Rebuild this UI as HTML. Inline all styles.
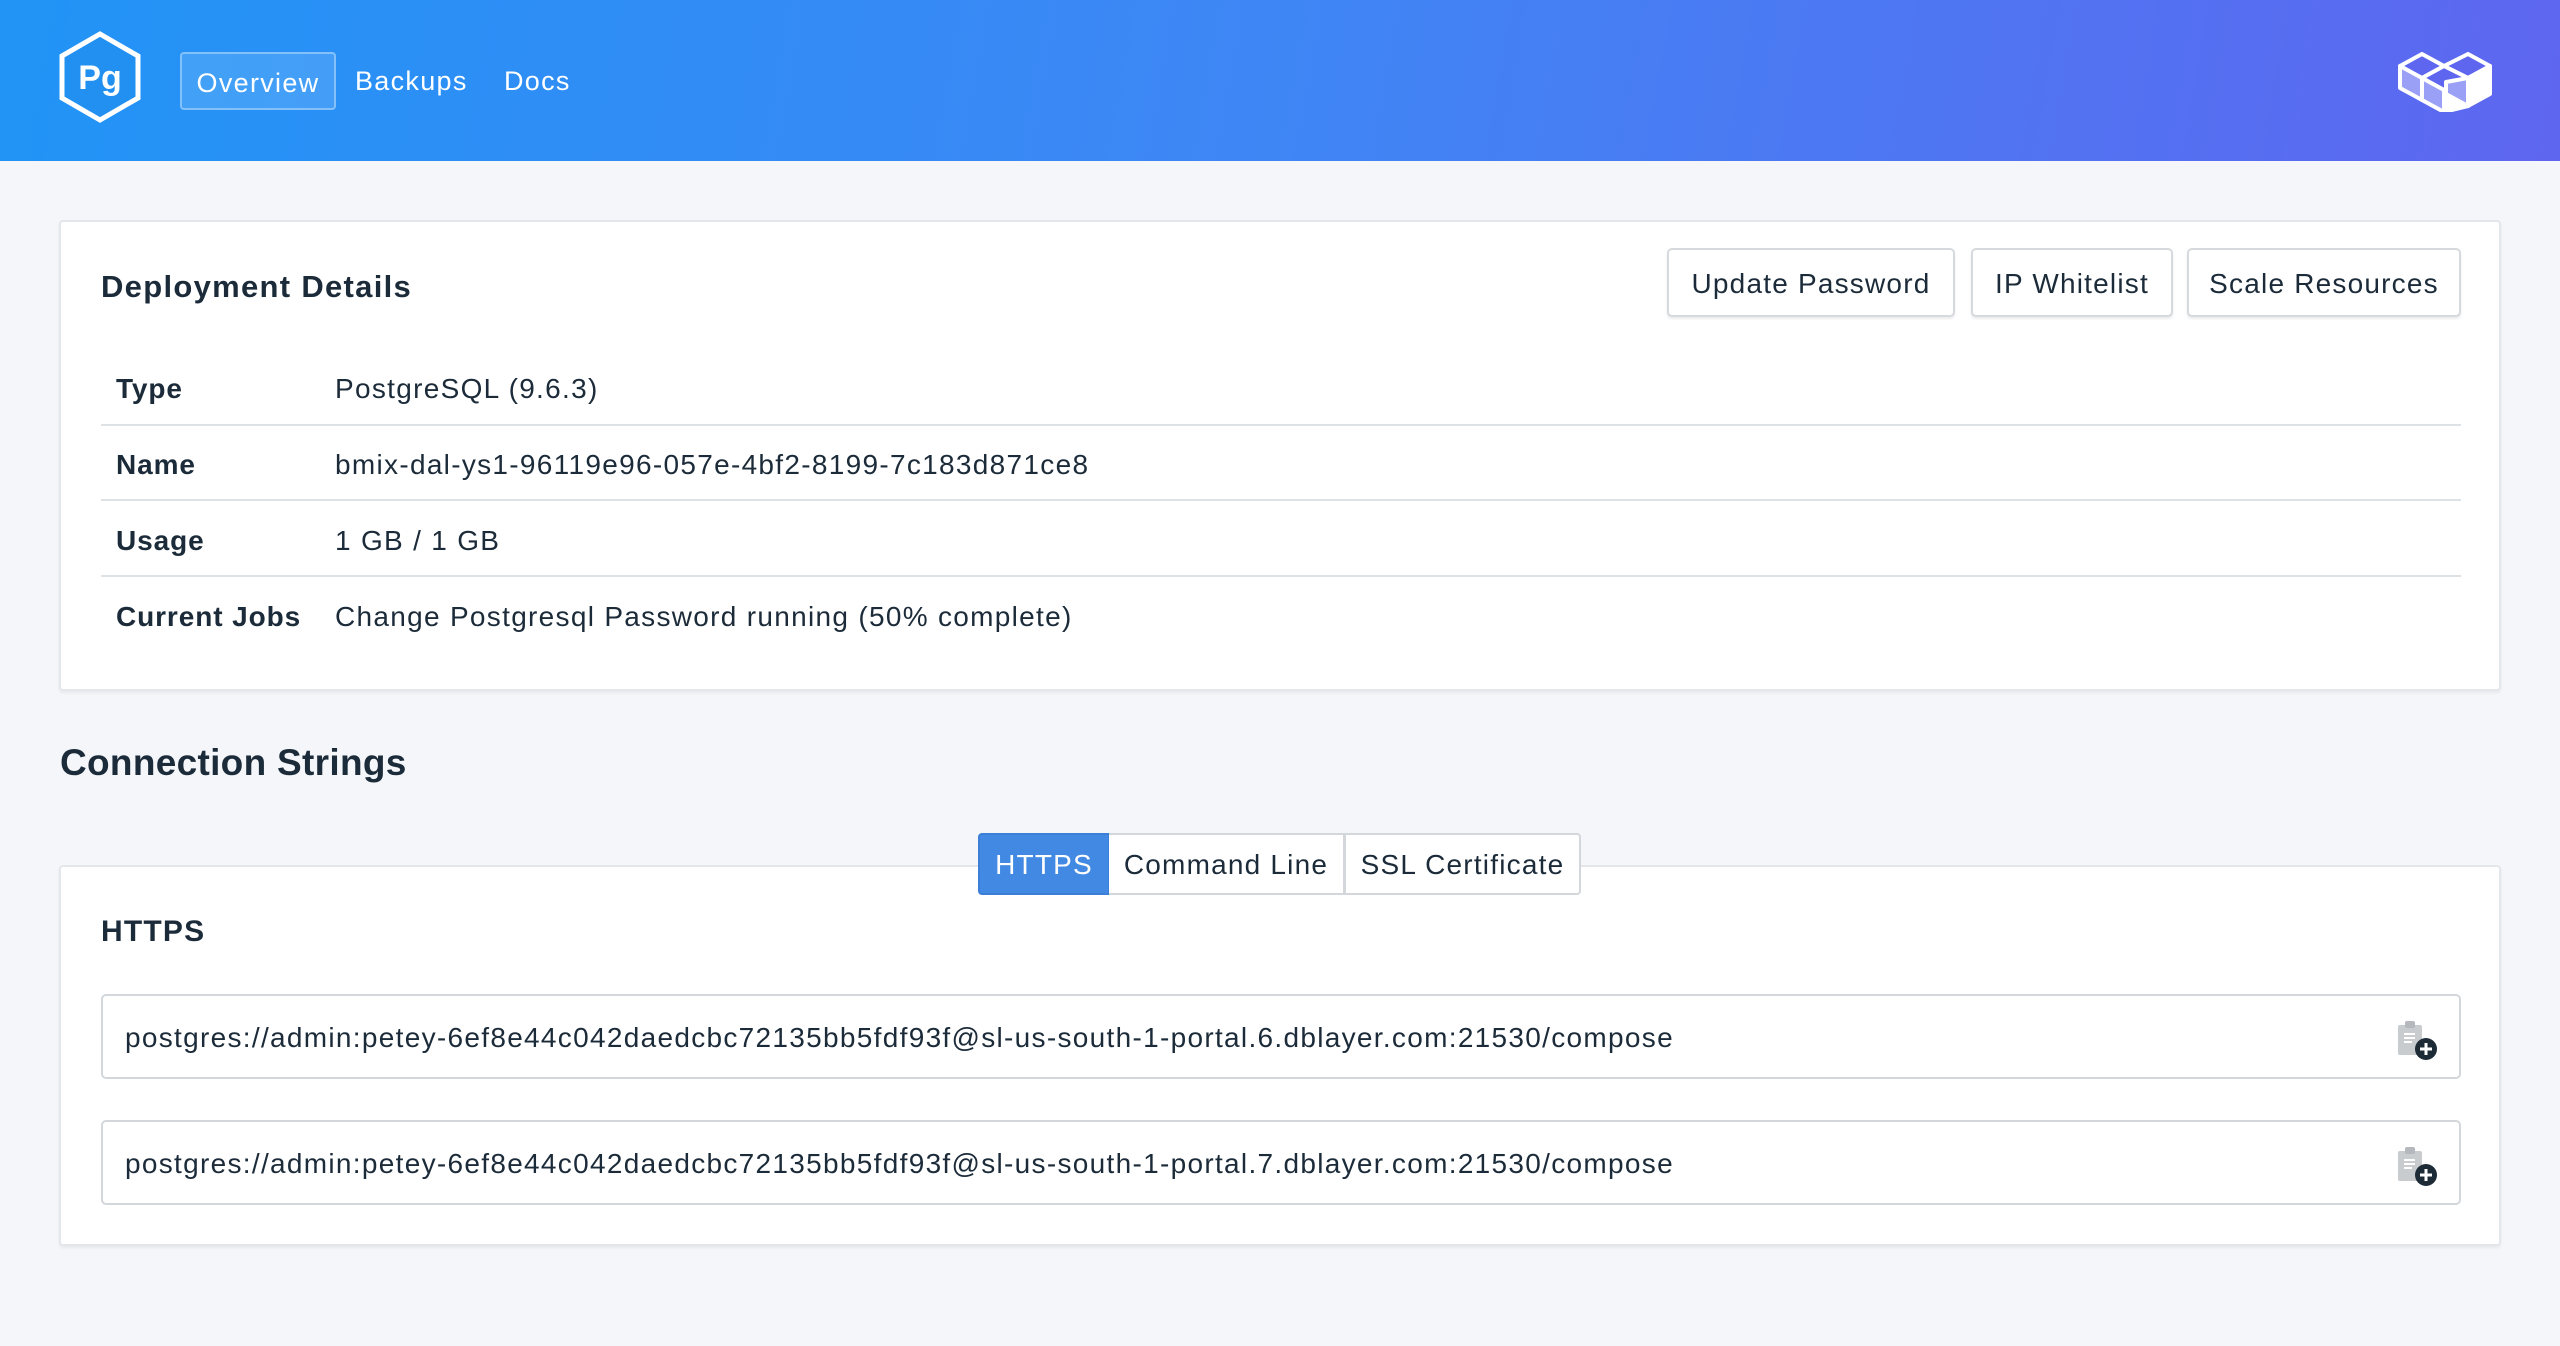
<!DOCTYPE html>
<html><head><meta charset="utf-8"><style>
*{box-sizing:border-box;margin:0;padding:0}
body{width:2560px;height:1346px;background:#f4f6f9;font-family:"Liberation Sans",sans-serif;color:#1c2b39;position:relative;overflow:hidden;letter-spacing:1.2px}
.hdr{position:absolute;left:0;top:0;width:2560px;height:161px;background:linear-gradient(100deg,#2194f6 0%,#3f86f5 50%,#5e66f0 100%)}
.nav{position:absolute;top:52px;height:58px;line-height:58px;color:#fff;font-size:27px;letter-spacing:1.3px}
.abs{position:absolute}
.card{position:absolute;background:#fff;border:2px solid #e3e7ec;border-radius:4px;box-shadow:0 2px 3px rgba(0,0,0,.06)}
.btn{position:absolute;top:248px;height:69px;background:#fff;border:2px solid #d6dade;border-radius:5px;font-size:28px;line-height:67px;text-align:center;box-shadow:0 2px 2px rgba(0,0,0,.08)}
.lbl{position:absolute;left:116px;font-size:28px;font-weight:bold;letter-spacing:0.9px}
.val{position:absolute;left:335px;font-size:28px;letter-spacing:1.3px}
.sep{position:absolute;left:101px;width:2360px;height:2px;background:#dde2e7}
.tab{position:absolute;top:833px;height:62px;line-height:60px;font-size:28px;text-align:center;background:#fff;border:2px solid #d3d7db}
.inp{position:absolute;left:101px;width:2360px;border:2px solid #d3d7db;border-radius:5px;background:#fff;font-size:28px;padding-left:22px;letter-spacing:1.3px}
</style></head><body>
<div class="hdr"></div>
<svg class="abs" style="left:58px;top:31px" width="84" height="92" viewBox="0 0 84 92"><polygon points="42,3 80,25 80,67 42,89 4,67 4,25" fill="#2190f0" stroke="#fff" stroke-width="5"/><text x="42" y="58" text-anchor="middle" fill="#fff" font-family="Liberation Sans" font-size="34" font-weight="bold" letter-spacing="0">Pg</text></svg>
<div class="nav" style="left:180px;width:156px;background:rgba(255,255,255,.13);border:2px solid rgba(255,255,255,.35);border-radius:4px;text-align:center">Overview</div>
<div class="nav" style="left:355px">Backups</div>
<div class="nav" style="left:504px">Docs</div>
<svg class="abs" style="left:2398px;top:52px" width="104" height="60" viewBox="0 0 104 60" fill="none" stroke="#fff" stroke-width="4" stroke-linejoin="round">
<path d="M2 14 L24 2 L46 14 L24 26 Z" fill="#5e66f0"/><path d="M46 14 L70 2 L92 14 L70 26 Z" fill="#5e66f0"/>
<path d="M24 26 L46 14 L70 26 L46 38 Z" fill="#5e66f0"/><path d="M70 26 L92 14 L92 42 L70 54 Z" fill="#fff"/>
<path d="M2 14 L2 36 L24 48 L24 26 Z" fill="#9aa0f6"/><path d="M24 26 L24 48 L46 60 L46 38 Z" fill="#9aa0f6"/>
<path d="M46 38 L70 26 L70 54 L46 60 Z" fill="#fff"/><path d="M70 26 L70 54 L48 42 L48 30 Z" fill="#9aa0f6"/>
</svg>

<div class="card" style="left:59px;top:220px;width:2442px;height:471px"></div>
<div class="abs" style="left:101px;top:269px;font-size:31px;font-weight:bold;color:#1c2b39;letter-spacing:1.3px">Deployment Details</div>
<div class="btn" style="left:1667px;width:288px">Update Password</div>
<div class="btn" style="left:1971px;width:202px">IP Whitelist</div>
<div class="btn" style="left:2187px;width:274px">Scale Resources</div>
<div class="lbl" style="top:373px">Type</div><div class="val" style="top:373px">PostgreSQL (9.6.3)</div>
<div class="sep" style="top:424px"></div>
<div class="lbl" style="top:449px">Name</div><div class="val" style="top:449px">bmix-dal-ys1-96119e96-057e-4bf2-8199-7c183d871ce8</div>
<div class="sep" style="top:499px"></div>
<div class="lbl" style="top:525px">Usage</div><div class="val" style="top:525px">1 GB / 1 GB</div>
<div class="sep" style="top:575px"></div>
<div class="lbl" style="top:601px">Current Jobs</div><div class="val" style="top:601px">Change Postgresql Password running (50% complete)</div>

<div class="abs" style="left:60px;top:742px;font-size:37px;font-weight:bold;color:#1c2b39;letter-spacing:0.3px">Connection Strings</div>
<div class="card" style="left:59px;top:865px;width:2442px;height:381px"></div>
<div class="tab" style="left:978px;width:132px;background:#4189e3;border-color:#3c7fd6;color:#fff;border-radius:4px 0 0 4px">HTTPS</div>
<div class="tab" style="left:1109px;width:236px;border-left:none">Command Line</div>
<div class="tab" style="left:1344px;width:237px;border-radius:0 4px 4px 0">SSL Certificate</div>
<div class="abs" style="left:101px;top:915px;font-size:30px;font-weight:bold">HTTPS</div>
<div class="inp" style="top:994px;height:85px;line-height:83px">postgres://admin:petey-6ef8e44c042daedcbc72135bb5fdf93f@sl-us-south-1-portal.6.dblayer.com:21530/compose</div>
<div class="inp" style="top:1120px;height:85px;line-height:83px">postgres://admin:petey-6ef8e44c042daedcbc72135bb5fdf93f@sl-us-south-1-portal.7.dblayer.com:21530/compose</div>
<svg class="abs" style="left:2396px;top:1020px" width="44" height="42" viewBox="0 0 44 42"><rect x="2" y="5" width="24" height="30" rx="2" fill="#c9cccf"/><rect x="9" y="1" width="10" height="7" rx="2" fill="#b5b9bd"/><path d="M8 14h11M8 18h11M8 22h8" stroke="#fff" stroke-width="2"/><circle cx="30" cy="29" r="11" fill="#1d2b37"/><path d="M30 23v12M24 29h12" stroke="#fff" stroke-width="3"/></svg>
<svg class="abs" style="left:2396px;top:1146px" width="44" height="42" viewBox="0 0 44 42"><rect x="2" y="5" width="24" height="30" rx="2" fill="#c9cccf"/><rect x="9" y="1" width="10" height="7" rx="2" fill="#b5b9bd"/><path d="M8 14h11M8 18h11M8 22h8" stroke="#fff" stroke-width="2"/><circle cx="30" cy="29" r="11" fill="#1d2b37"/><path d="M30 23v12M24 29h12" stroke="#fff" stroke-width="3"/></svg>
</body></html>
